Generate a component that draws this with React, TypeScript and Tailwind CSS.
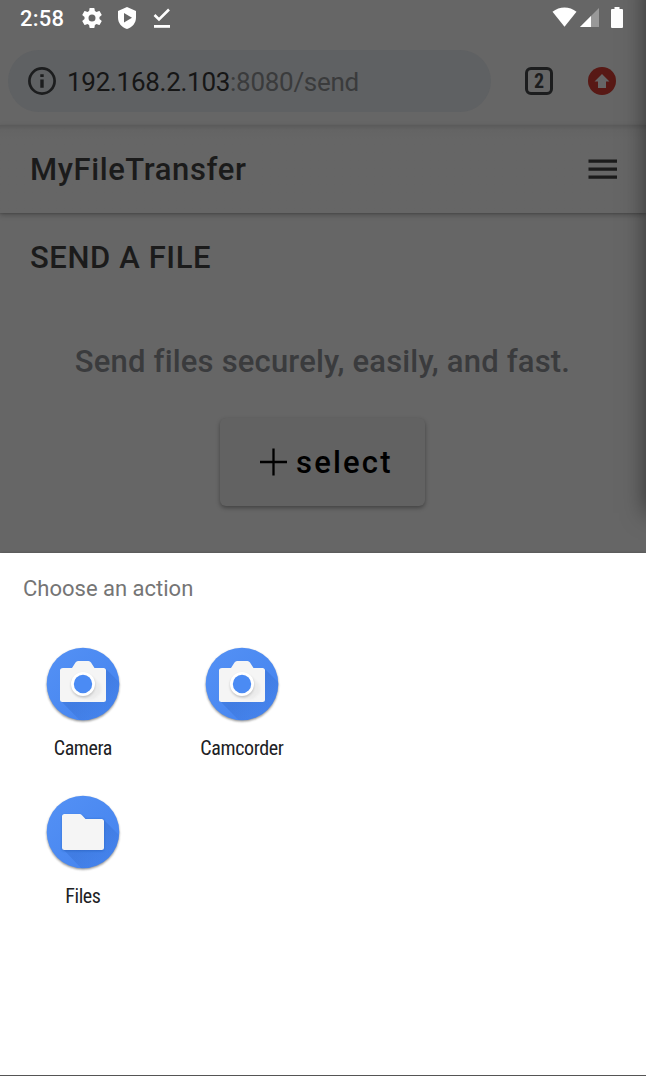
import type { ReactNode } from 'react';

function StatusBar() {
  return (
    <div className="flex h-[38px] items-start justify-between pl-[20px] pr-[23px] text-white">
      <div className="flex">
        <span className="mt-[3px] w-[59px] text-[22px] leading-[32px] font-medium tracking-[0.2px]">2:58</span>
        <svg className="mt-[6px] h-[24px] w-[26px]" viewBox="0 0 24 24" fill="currentColor">
          <path d="M19.43 12.98c.04-.32.07-.64.07-.98s-.03-.66-.07-.98l2.11-1.65c.19-.15.24-.42.12-.64l-2-3.46c-.12-.22-.39-.3-.61-.22l-2.49 1c-.52-.4-1.08-.73-1.69-.98l-.38-2.65A.49.49 0 0 0 14 2h-4c-.25 0-.46.18-.49.42l-.38 2.65c-.61.25-1.17.59-1.69.98l-2.49-1c-.23-.09-.49 0-.61.22l-2 3.46c-.13.22-.07.49.12.64l2.11 1.65c-.04.32-.07.65-.07.98s.03.66.07.98l-2.11 1.65c-.19.15-.24.42-.12.64l2 3.46c.12.22.39.3.61.22l2.49-1c.52.4 1.08.73 1.69.98l.38 2.65c.03.24.24.42.49.42h4c.25 0 .46-.18.49-.42l.38-2.65c.61-.25 1.17-.59 1.69-.98l2.49 1c.23.09.49 0 .61-.22l2-3.46c.12-.22.07-.49-.12-.64l-2.11-1.65zM12 15.5a3.5 3.5 0 1 1 0-7 3.5 3.5 0 0 1 0 7z" />
        </svg>
        <svg className="mt-[7px] ml-[12px] h-[22px] w-[20px]" viewBox="0 0 20 22" fill="currentColor">
          <path fillRule="evenodd" d="M10 0 L19 4 V10.5 C19 16 15.5 20.300 10 22 C4.500 20.300 1 16 1 10.500 V4 Z M7 6 V15.500 L15 10.700 Z" />
        </svg>
        <svg className="mt-[7px] ml-[15px] h-[21px] w-[20px]" viewBox="0 0 20 21">
          <path d="M2.500 8 L7 12.500 L17 2.500" fill="none" stroke="currentColor" strokeWidth="2.600" />
          <path d="M2 18h16v2.800H2z" fill="currentColor" />
        </svg>
      </div>
      <div className="flex">
        <svg className="mt-[7px] h-[20px] w-[25px]" viewBox="0 0 25 20" fill="currentColor">
          <path d="M.5 4.800 C7.500 -1 17.500 -1 24.500 4.800 L12.500 19.800 Z" />
        </svg>
        <svg className="mt-[8px] ml-[3px] h-[19px] w-[19px]" viewBox="0 0 19 19">
          <path d="M0 19 L19 0 V19Z" fill="#999" />
          <path d="M0 19 L11 8 V19Z" fill="#fff" />
        </svg>
        <svg className="mt-[7px] ml-[12px] h-[21px] w-[12px]" viewBox="0 0 12 21" fill="currentColor">
          <path d="M3.500 0h5v2H11a1 1 0 0 1 1 1v17a1 1 0 0 1-1 1H1a1 1 0 0 1-1-1V3a1 1 0 0 1 1-1h2.500Z" />
        </svg>
      </div>
    </div>
  );
}

function AddressBar() {
  return (
    <div className="flex h-[87px] items-start pt-[12px] pl-[8px]">
      <div className="flex h-[62px] w-[483px] items-center rounded-full bg-[#5f6163] pl-[20px]">
        <svg className="h-[28px] w-[28px]" viewBox="0 0 28 28" fill="#1c1d1e">
          <circle cx="14" cy="14" r="12.600" fill="none" stroke="#1c1d1e" strokeWidth="2.700" />
          <path d="M12.300 7.200h3.400V10h-3.400zM12.300 12.400h3.400v8.400h-3.400z" />
        </svg>
        <span className="mt-[2px] ml-[11px] text-[26px] leading-[30px] tracking-[-0.28px] whitespace-nowrap text-[#161616]">
          192.168.2.103<span className="text-[#3a3b3c]">:8080/send</span>
        </span>
      </div>
      <div className="mt-[17px] ml-[34px] flex h-[28px] w-[28px] items-center justify-center rounded-[6px] border-[3px] border-[#1c1d1e] font-['Roboto_Condensed',Roboto,sans-serif] text-[20px] leading-none font-bold text-[#1c1d1e] [font-stretch:75%]">
        <span className="-mt-px">2</span>
      </div>
      <svg className="mt-[17px] ml-[35px] h-[28px] w-[28px]" viewBox="0 0 28 28">
        <circle cx="14" cy="14" r="14" fill="#581915" />
        <path d="M14 7 L21.500 14.500 H18 V21 H10 V14.500 H6.500Z" fill="#666" />
      </svg>
    </div>
  );
}

function CircleIcon({ id, children }: { id: string; children: ReactNode }) {
  return (
    <svg className="h-[80px] w-[80px]" viewBox="0 0 80 80">
      <defs>
        <clipPath id={`${id}-clip`}><circle cx="40" cy="40" r="36.300" /></clipPath>
        <linearGradient id={`${id}-blue`} x1="0" y1="0" x2="1" y2="1">
          <stop offset="0" stopColor="#5491f5" /><stop offset="1" stopColor="#4483ee" />
        </linearGradient>
        <linearGradient id={`${id}-shade`} x1="0" y1="0" x2="1" y2="1">
          <stop offset=".35" stopColor="#2459b8" stopOpacity=".25" /><stop offset=".68" stopColor="#2459b8" stopOpacity="0" />
        </linearGradient>
        <filter id={`${id}-blur`} x="-20%" y="-20%" width="140%" height="140%"><feGaussianBlur stdDeviation=".8" /></filter>
      </defs>
      <circle cx="40" cy="41.300" r="36.300" fill="#555" opacity=".65" filter={`url(#${id}-blur)`} />
      <circle cx="40" cy="40" r="36.300" fill={`url(#${id}-blue)`} />
      {children}
    </svg>
  );
}

function CameraIcon({ id }: { id: string }) {
  return (
    <CircleIcon id={id}>
      <g clipPath={`url(#${id}-clip)`}>
        <path d="M62 24 L95 57 V95 H55 L18 57Z" fill={`url(#${id}-shade)`} />
      </g>
      <path d="M20 24H29L32.500 18.500Q33.500 17 35 17H45.500Q47 17 48 18.500L51.500 24H60.500Q63 24 63 26.500V55.500Q63 58 60.500 58H19.500Q17 58 17 55.500V26.500Q17 24 20 24Z" fill="#f5f5f5" />
      <path d="M48.500 31.500L58 41V49L51 55H42L32 48.500Z" fill="#9e9e9e" opacity=".1" filter={`url(#${id}-blur)`} />
      <circle cx="40" cy="41.500" r="12" fill="#777" opacity=".38" filter={`url(#${id}-blur)`} />
      <circle cx="40" cy="40" r="12" fill="#fff" />
      <circle cx="40" cy="40" r="9.200" fill="#4b8bf4" />
    </CircleIcon>
  );
}

function FolderIcon() {
  return (
    <CircleIcon id="files">
      <g clipPath="url(#files-clip)">
        <path d="M60 27 L95 62 V95 H56 L19 56Z" fill="url(#files-shade)" />
      </g>
      <path d="M21.500 23H36.500Q38 23 39 24L42.500 27H58.500Q61 27 61 29.500V56.500Q61 59 58.500 59H21.500Q19 59 19 56.500V25.500Q19 23 21.500 23Z" fill="#235ab5" opacity=".55" filter="url(#files-blur)" />
      <path d="M21.500 22H36.500Q38 22 39 23.200L42.500 27H58.500Q61 27 61 29.500V55.500Q61 58 58.500 58H21.500Q19 58 19 55.500V24.500Q19 22 21.500 22Z" fill="#f5f5f5" />
    </CircleIcon>
  );
}

function Action({ label, children }: { label: string; children: ReactNode }) {
  return (
    <div className="flex h-[148px] w-[159px] flex-col items-center">
      {children}
      <span className="mt-[12px] font-['Roboto_Condensed',Roboto,sans-serif] text-[20px] leading-[24px] font-normal tracking-[-0.38px] text-[#202124] [font-stretch:75%]">{label}</span>
    </div>
  );
}

export default function App() {
  return (
    <div className="relative flex h-[1076px] w-[646px] flex-col overflow-hidden bg-[#666] font-[Roboto,sans-serif]">
      <StatusBar />
      <AddressBar />
      <header className="flex h-[88px] items-center justify-between bg-linear-to-b from-[#5a5a5a] via-[#646464] via-[5px] to-[#666] to-[14px] pr-[29px] pl-[30px] shadow-[0_2px_5px_rgba(0,0,0,0.25),0_1px_1px_rgba(0,0,0,0.08)]">
        <h1 className="mt-[2px] text-[31px] leading-[40px] font-medium tracking-[0.6px] text-[#1b1b1b]">MyFileTransfer</h1>
        <svg className="h-[22px] w-[29px]" viewBox="0 0 29 22" fill="#1b1b1b">
          <path d="M0.500 1.500h28.500v3.300H0.500zM0.500 9.500h28.500v3.300H0.500zM0.500 17.500h28.500v3.300H0.500z" />
        </svg>
      </header>
      <main className="flex h-[340px] flex-col">
        <h2 className="mt-[25px] ml-[30px] text-[31px] leading-[40px] font-medium tracking-[0.6px] text-[#1b1b1b]">SEND A FILE</h2>
        <p className="mt-[64px] -ml-px text-center text-[31px] leading-[40px] font-medium tracking-[0.18px] whitespace-nowrap text-[#3a3b3d]">Send files securely, easily, and fast.</p>
        <button className="mt-[36px] ml-[220px] flex h-[88px] w-[205px] items-center rounded-[6px] bg-[#626262] pl-[39px] text-[31px] leading-[40px] font-medium tracking-[2.2px] text-black shadow-[0_2px_4px_rgba(0,0,0,0.35)]">
          <svg className="mr-[9px] h-[28px] w-[28px] shrink-0" viewBox="0 0 28 28" fill="none" stroke="currentColor" strokeWidth="2.300">
            <path d="M14.500 .5V27.500M1 14H28" />
          </svg>
          <span className="mt-[2px]">select</span>
        </button>
      </main>
      <section className="z-10 flex h-[522px] flex-col bg-white shadow-[0_0_3px_rgba(0,0,0,0.25)]">
        <h3 className="mt-[21px] ml-[23px] text-[22px] leading-[30px] text-[#757575]">Choose an action</h3>
        <div className="mt-[40px] ml-[3.400px] grid w-[477px] grid-cols-[159px_159px_159px]">
          <Action label="Camera"><CameraIcon id="camera" /></Action>
          <Action label="Camcorder"><CameraIcon id="camcorder" /></Action>
          <div />
          <Action label="Files"><FolderIcon /></Action>
        </div>
      </section>
      <div className="z-10 h-px bg-[#555]" />
      <div className="absolute top-[-20px] left-[646px] h-[533px] w-[200px] shadow-[0_0_22px_rgba(0,0,0,0.5)]" />
    </div>
  );
}
